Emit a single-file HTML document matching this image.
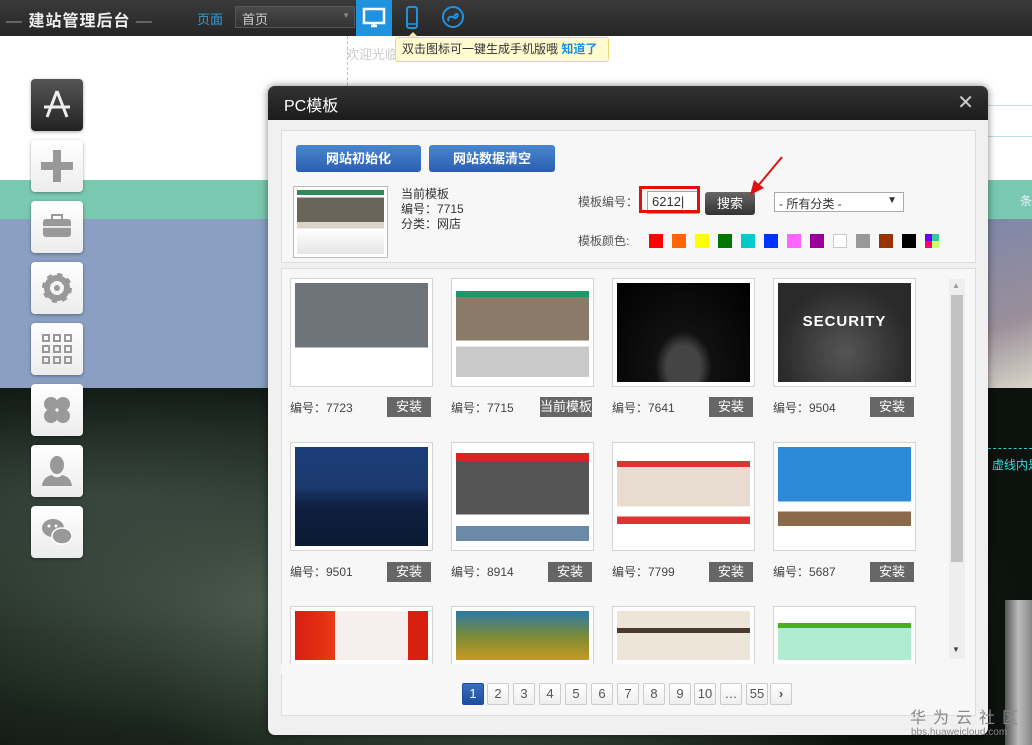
<!DOCTYPE html>
<html><head><meta charset="utf-8"><style>
*{margin:0;padding:0;box-sizing:border-box}
body{width:1032px;height:745px;overflow:hidden;position:relative;font-family:"Liberation Sans","Noto Sans CJK SC",sans-serif;font-size:12px;color:#333;background:#fff}
.a{position:absolute;white-space:nowrap}
.top{left:0;top:0;width:1032px;height:36px;background:linear-gradient(#3a3a3a,#262626)}
.sb{left:31px;width:52px;height:52px;border-radius:4px;background:linear-gradient(#fff,#ececec);box-shadow:0 1px 3px rgba(0,0,0,.35)}
.th{width:143px;height:109px;border:1px solid #d4d4d4;background:#fff;padding:4px}
.th div{width:100%;height:100%}
.lb{font-size:12px;color:#444}
.bt{width:44px;height:20px;background:#666;color:#fff;font-size:13px;text-align:center;line-height:20px}
.pg{top:683px;width:22px;height:22px;border:1px solid #ccc;background:linear-gradient(#fff,#eee);text-align:center;line-height:20px;font-size:13px;color:#555;border-radius:2px}
.sw{top:234px;width:14px;height:14px}
</style></head><body>
<div class="a" style="left:0;top:36px;width:1032px;height:144px;background:#fff"></div>
<div class="a" style="left:0;top:180px;width:1032px;height:39px;background:#79c8b0"></div>
<div class="a" style="left:0;top:219px;width:1032px;height:169px;background:#8b9fc3"></div>
<div class="a" style="left:988px;top:219px;width:44px;height:169px;background:linear-gradient(160deg,#7f87a8,#9a8f9a 60%,#d9d4c8)"></div>
<div class="a" style="left:0;top:388px;width:1032px;height:357px;background:radial-gradient(ellipse at 30% 60%,#4a5a4c,#1a241c 45%,#0c120e 70%),#1a2a20"></div>
<div class="a" style="left:0;top:388px;width:1032px;height:357px;background:radial-gradient(ellipse at 50% 80%,rgba(90,110,90,.5),transparent 50%),radial-gradient(ellipse at 10% 30%,rgba(80,100,90,.5),transparent 40%)"></div>
<div class="a" style="left:1005px;top:600px;width:27px;height:145px;background:linear-gradient(90deg,#555,#bbb 50%,#888)"></div>
<div class="a" style="left:347px;top:36px;width:0;height:60px;border-left:1px dashed #e0b8a0"></div>
<div class="a" style="left:346px;top:44px;color:#ccc;font-size:13px">欢迎光临</div>
<div class="a" style="left:988px;top:448px;width:44px;border-top:1px dashed #3cc"></div>
<div class="a" style="left:992px;top:456px;color:#3dd;font-size:12px">虚线内是</div>
<div class="a" style="left:988px;top:105px;width:44px;border-top:1px solid #bde"></div>
<div class="a" style="left:988px;top:136px;width:44px;border-top:1px solid #bde"></div>
<div class="a" style="left:1020px;top:192px;color:#eef;font-size:12px">条</div>

<div class="a top"></div>
<div class="a" style="left:6px;top:7px;color:#eee;font-size:16px;font-weight:bold;letter-spacing:1px"><span style="color:#999;font-weight:normal">—</span> 建站管理后台 <span style="color:#999;font-weight:normal">—</span></div>
<div class="a" style="left:197px;top:9px;color:#3a9ad9;font-size:13px">页面</div>
<div class="a" style="left:235px;top:6px;width:120px;height:22px;background:linear-gradient(#4a4a4a,#333);border:1px solid #555;color:#ccc;font-size:13px;padding:2px 6px">首页<span style="position:absolute;right:4px;top:4px;font-size:8px;color:#888">▼</span></div>
<div class="a" style="left:356px;top:0;width:36px;height:36px;background:#1f93e0"></div>
<svg class="a" style="left:362px;top:6px" width="24" height="24" viewBox="0 0 24 24"><rect x="2" y="3" width="20" height="14" fill="none" stroke="#fff" stroke-width="2.5"/><path d="M9 20h6M12 17v3" stroke="#fff" stroke-width="2.5"/></svg>
<svg class="a" style="left:404px;top:5px" width="16" height="26" viewBox="0 0 16 26"><rect x="3" y="2" width="10" height="21" rx="2" fill="none" stroke="#1f93e0" stroke-width="2"/><line x1="3" y1="19" x2="13" y2="19" stroke="#1f93e0" stroke-width="1.5"/></svg>
<svg class="a" style="left:441px;top:5px" width="24" height="24" viewBox="0 0 24 24"><circle cx="12" cy="12" r="10" fill="none" stroke="#1f93e0" stroke-width="2"/><path d="M8 16c-2-2 0-5 3-4s3-4 5-3c2 2-1 5-3 4" fill="none" stroke="#1f93e0" stroke-width="2"/></svg>
<div class="a" style="left:408px;top:32px;width:0;height:0;border:5px solid transparent;border-bottom-color:#f5e8a8;border-top:0"></div>
<div class="a" style="left:395px;top:37px;width:214px;height:25px;background:#fffbd0;border:1px solid #e8d878;border-radius:3px;font-size:12px;line-height:23px;padding-left:6px;color:#333">双击图标可一键生成手机版哦 <span style="color:#1a8de0;font-weight:bold">知道了</span></div>

<div class="a sb" style="top:79px;background:linear-gradient(#555,#222)"></div>
<svg class="a" style="left:39px;top:87px" width="36" height="36" viewBox="0 0 36 36"><path d="M18 4L8 30M18 4l10 26M5 20h26" stroke="#eee" stroke-width="3" fill="none"/></svg>
<div class="a sb" style="top:140px"></div>
<svg class="a" style="left:39px;top:148px" width="36" height="36"><path d="M14 2h8v12h12v8H22v12h-8V22H2v-8h12z" fill="#999"/></svg>
<div class="a sb" style="top:201px"></div>
<svg class="a" style="left:39px;top:209px" width="36" height="36"><rect x="4" y="10" width="28" height="18" rx="3" fill="#999"/><path d="M13 10V6h10v4" stroke="#999" stroke-width="2" fill="none"/><path d="M4 18h28" stroke="#fff" stroke-width="1.5"/></svg>
<div class="a sb" style="top:262px"></div>
<svg class="a" style="left:39px;top:270px" width="36" height="36"><circle cx="18" cy="18" r="11" fill="none" stroke="#999" stroke-width="8" stroke-dasharray="4.3 4.3"/><circle cx="18" cy="18" r="10" fill="none" stroke="#999" stroke-width="6"/><circle cx="18" cy="18" r="3" fill="#999"/></svg>
<div class="a sb" style="top:323px"></div>
<svg class="a" style="left:39px;top:331px" width="36" height="36" fill="none" stroke="#999" stroke-width="2"><rect x="4" y="4" width="6" height="6"/><rect x="15" y="4" width="6" height="6"/><rect x="26" y="4" width="6" height="6"/><rect x="4" y="15" width="6" height="6"/><rect x="15" y="15" width="6" height="6"/><rect x="26" y="15" width="6" height="6"/><rect x="4" y="26" width="6" height="6"/><rect x="15" y="26" width="6" height="6"/><rect x="26" y="26" width="6" height="6"/></svg>
<div class="a sb" style="top:384px"></div>
<svg class="a" style="left:39px;top:392px" width="36" height="36" fill="#999"><circle cx="12" cy="12" r="7"/><circle cx="24" cy="12" r="7"/><circle cx="12" cy="24" r="7"/><circle cx="24" cy="24" r="7"/></svg>
<div class="a sb" style="top:445px"></div>
<svg class="a" style="left:39px;top:453px" width="36" height="36" fill="#999"><ellipse cx="18" cy="12" rx="7" ry="9"/><path d="M3 33c1-8 6-10 10-11 2 3 8 3 10 0 4 1 9 3 10 11z"/></svg>
<div class="a sb" style="top:506px"></div>
<svg class="a" style="left:39px;top:514px" width="36" height="36" fill="#999"><ellipse cx="14" cy="14" rx="11" ry="9"/><ellipse cx="23" cy="22" rx="10" ry="8" stroke="#fff" stroke-width="1.5"/><circle cx="10" cy="12" r="1.5" fill="#fff"/><circle cx="17" cy="12" r="1.5" fill="#fff"/></svg>

<div class="a" style="left:268px;top:86px;width:720px;height:649px;background:#f0f0f0;border-radius:7px;box-shadow:0 0 8px rgba(0,0,0,.5);overflow:hidden">
 <div style="height:34px;background:linear-gradient(#333,#1c1c1c);color:#fff;font-size:16px;padding:6px 0 0 16px">PC模板<span style="position:absolute;right:14px;top:4px;font-size:20px;color:#ccc">✕</span></div>
</div>
<div class="a" style="left:281px;top:130px;width:695px;height:133px;background:#f7f7f7;border:1px solid #ddd"></div>
<div class="a" style="left:296px;top:145px;width:125px;height:27px;background:linear-gradient(#4a86d0,#2a5faf);border-radius:3px;color:#fff;font-weight:bold;font-size:13px;text-align:center;line-height:27px">网站初始化</div>
<div class="a" style="left:429px;top:145px;width:126px;height:27px;background:linear-gradient(#4a86d0,#2a5faf);border-radius:3px;color:#fff;font-weight:bold;font-size:13px;text-align:center;line-height:27px">网站数据清空</div>
<div class="a" style="left:293px;top:186px;width:95px;height:72px;border:1px solid #bbb;background:#fff;padding:3px"><div style="height:100%;background:linear-gradient(#2f8a5a 0 8%,#fff 8% 12%,#6b6458 12% 50%,#d9d4c7 50% 60%,#fff 60%,#e6e6e6)"></div></div>
<div class="a" style="left:401px;top:187px;font-size:12px;line-height:15px;color:#333">当前模板<br>编号：7715<br>分类：网店</div>
<div class="a" style="left:578px;top:193px;color:#555">模板编号：</div>
<div class="a" style="left:647px;top:191px;width:52px;height:23px;border:1px solid #9ab;background:#fff;font-size:13px;padding:2px 4px">6212|</div>
<div class="a" style="left:639px;top:186px;width:61px;height:27px;border:3px solid #e01010"></div>
<div class="a" style="left:705px;top:192px;width:50px;height:23px;background:linear-gradient(#666,#333);border-radius:3px;color:#fff;font-size:13px;text-align:center;line-height:23px">搜索</div>
<svg class="a" style="left:745px;top:155px" width="40" height="42"><path d="M37 2L12 32" stroke="#e01010" stroke-width="2"/><path d="M5 40l4-15 10 8z" fill="#e01010"/></svg>
<div class="a" style="left:774px;top:192px;width:130px;height:20px;border:1px solid #aaa;background:#fff;font-size:12px;padding:2px 4px">- 所有分类 -<span style="position:absolute;right:6px;top:2px;font-size:10px">▼</span></div>
<div class="a" style="left:578px;top:232px;color:#555">模板颜色:</div>
<div class="a sw" style="left:649px;background:#f00"></div>
<div class="a sw" style="left:672px;background:#f60"></div>
<div class="a sw" style="left:695px;background:#ff0"></div>
<div class="a sw" style="left:718px;background:#070"></div>
<div class="a sw" style="left:741px;background:#0cc"></div>
<div class="a sw" style="left:764px;background:#03f"></div>
<div class="a sw" style="left:787px;background:#f6f"></div>
<div class="a sw" style="left:810px;background:#909"></div>
<div class="a sw" style="left:833px;background:#fff;border:1px solid #ccc"></div>
<div class="a sw" style="left:856px;background:#999"></div>
<div class="a sw" style="left:879px;background:#930"></div>
<div class="a sw" style="left:902px;background:#000"></div>
<div class="a sw" style="left:925px;background:conic-gradient(#3c9 0 25%,#cf6 0 50%,#f06 0 75%,#60f 0)"></div>

<div class="a" style="left:281px;top:268px;width:695px;height:448px;background:#f7f7f7;border:1px solid #ddd"></div>
<div class="a" style="left:949px;top:279px;width:16px;height:380px;background:#eee"></div>
<div class="a" style="left:951px;top:295px;width:12px;height:267px;background:#c2c2c2"></div>
<div class="a" style="left:952px;top:281px;font-size:8px;color:#999">▲</div>
<div class="a" style="left:952px;top:645px;font-size:8px;color:#444">▼</div>

<div class="a th" style="left:290px;top:278px"><div style="background:linear-gradient(#6f747a 0 65%,#fff 65%)"></div></div>
<div class="a th" style="left:451px;top:278px"><div style="background:linear-gradient(#fff 0 8%,#1a9a6a 8% 14%,#8a7a68 14% 58%,#fff 58% 64%,#c9c9c9 64% 95%,#fff 95%)"></div></div>
<div class="a th" style="left:612px;top:278px"><div style="background:radial-gradient(ellipse at 50% 85%,#444 0 18%,#111 30%,#000)"></div></div>
<div class="a th" style="left:773px;top:278px"><div style="background:radial-gradient(ellipse at 50% 70%,#555,#2a2a2a 70%);color:#fff;font-weight:bold;font-size:15px;text-align:center;padding-top:30px;letter-spacing:1px">SECURITY</div></div>
<div class="a lb" style="left:290px;top:399px">编号：7723</div><div class="a bt" style="left:387px;top:397px">安装</div>
<div class="a lb" style="left:451px;top:399px">编号：7715</div><div class="a bt" style="left:540px;top:397px;width:52px">当前模板</div>
<div class="a lb" style="left:612px;top:399px">编号：7641</div><div class="a bt" style="left:709px;top:397px">安装</div>
<div class="a lb" style="left:773px;top:399px">编号：9504</div><div class="a bt" style="left:870px;top:397px">安装</div>
<div class="a th" style="left:290px;top:442px"><div style="background:linear-gradient(#1b3d7a,#1b3a6e 40%,#0e1f40 60%,#0b1a33)"></div></div>
<div class="a th" style="left:451px;top:442px"><div style="background:linear-gradient(#fff 0 6%,#d22 6% 14%,#555 14% 68%,#fff 68% 80%,#6a8aa8 80% 95%,#fff 95%)"></div></div>
<div class="a th" style="left:612px;top:442px"><div style="background:linear-gradient(#fff 0 14%,#d33 14% 20%,#e8dcd0 20% 60%,#fff 60% 70%,#d33 70% 78%,#fff 78%)"></div></div>
<div class="a th" style="left:773px;top:442px"><div style="background:linear-gradient(#2c8ad8 0 55%,#fff 55% 65%,#8a6a4a 65% 80%,#fff 80%)"></div></div>
<div class="a lb" style="left:290px;top:563px">编号：9501</div><div class="a bt" style="left:387px;top:562px">安装</div>
<div class="a lb" style="left:451px;top:563px">编号：8914</div><div class="a bt" style="left:548px;top:562px">安装</div>
<div class="a lb" style="left:612px;top:563px">编号：7799</div><div class="a bt" style="left:709px;top:562px">安装</div>
<div class="a lb" style="left:773px;top:563px">编号：5687</div><div class="a bt" style="left:870px;top:562px">安装</div>
<div class="a th" style="left:290px;top:606px;height:58px;border-bottom:0"><div style="background:linear-gradient(90deg,#d81e10,#e83a18 30%,#f5f0ee 30% 85%,#d82010 85%)"></div></div>
<div class="a th" style="left:451px;top:606px;height:58px;border-bottom:0"><div style="background:linear-gradient(#2a7aa8,#7a8a3a 50%,#c79a20)"></div></div>
<div class="a th" style="left:612px;top:606px;height:58px;border-bottom:0"><div style="background:linear-gradient(#ede6d8 0 35%,#4a3a30 35% 45%,#ede6d8 45%)"></div></div>
<div class="a th" style="left:773px;top:606px;height:58px;border-bottom:0"><div style="background:linear-gradient(#fff 0 25%,#4ab01a 25% 35%,#b0ecd0 35%)"></div></div>
<div class="a" style="left:281px;top:664px;width:660px;height:10px;background:#f7f7f7"></div>

<div class="a pg" style="left:462px;background:linear-gradient(#3a6fc0,#1d4e9e);color:#fff;border-color:#1d4e9e">1</div>
<div class="a pg" style="left:487px">2</div>
<div class="a pg" style="left:513px">3</div>
<div class="a pg" style="left:539px">4</div>
<div class="a pg" style="left:565px">5</div>
<div class="a pg" style="left:591px">6</div>
<div class="a pg" style="left:617px">7</div>
<div class="a pg" style="left:643px">8</div>
<div class="a pg" style="left:669px">9</div>
<div class="a pg" style="left:694px">10</div>
<div class="a pg" style="left:720px">…</div>
<div class="a pg" style="left:746px">55</div>
<div class="a pg" style="left:770px;font-weight:bold">›</div>

<div class="a" style="left:910px;top:704px;color:#888;font-size:16px;letter-spacing:7px">华为云社区</div>
<div class="a" style="left:911px;top:727px;color:#888;font-size:10px">bbs.huaweicloud.com</div>
</body></html>
